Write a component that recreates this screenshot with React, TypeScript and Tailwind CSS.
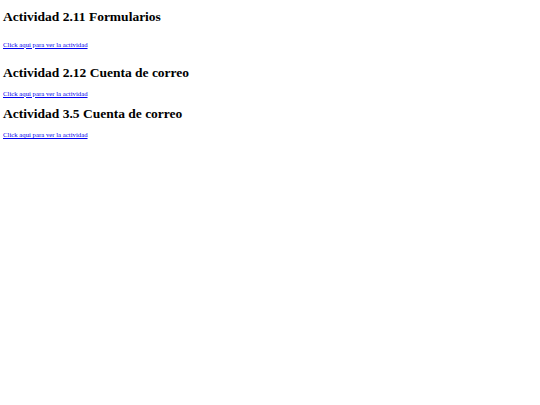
export default function App() {
  return (
    <div className="bg-white min-h-[405px] px-[3px] pt-[8.5px] text-black" style={{ fontFamily: '"Liberation Serif", "Times New Roman", serif' }}>
      <h2 className="text-[13.5px] font-bold leading-[16px]">Actividad 2.11 Formularios</h2>
      <p className="mt-[16px] text-[6.75px] leading-[8px]">
        <a href="#" className="text-[#0000ee] underline">Click aqui para ver la actividad</a>
      </p>
      <h2 className="mt-[16.5px] text-[13.5px] font-bold leading-[16px]">Actividad 2.12 Cuenta de correo</h2>
      <p className="mt-[8.5px] text-[6.75px] leading-[8px]">
        <a href="#" className="text-[#0000ee] underline">Click aqui para ver la actividad</a>
      </p>
      <h2 className="mt-[8.5px] text-[13.5px] font-bold leading-[16px]">Actividad 3.5 Cuenta de correo</h2>
      <p className="mt-[9px] text-[6.75px] leading-[8px]">
        <a href="#" className="text-[#0000ee] underline">Click aqui para ver la actividad</a>
      </p>
    </div>
  );
}
